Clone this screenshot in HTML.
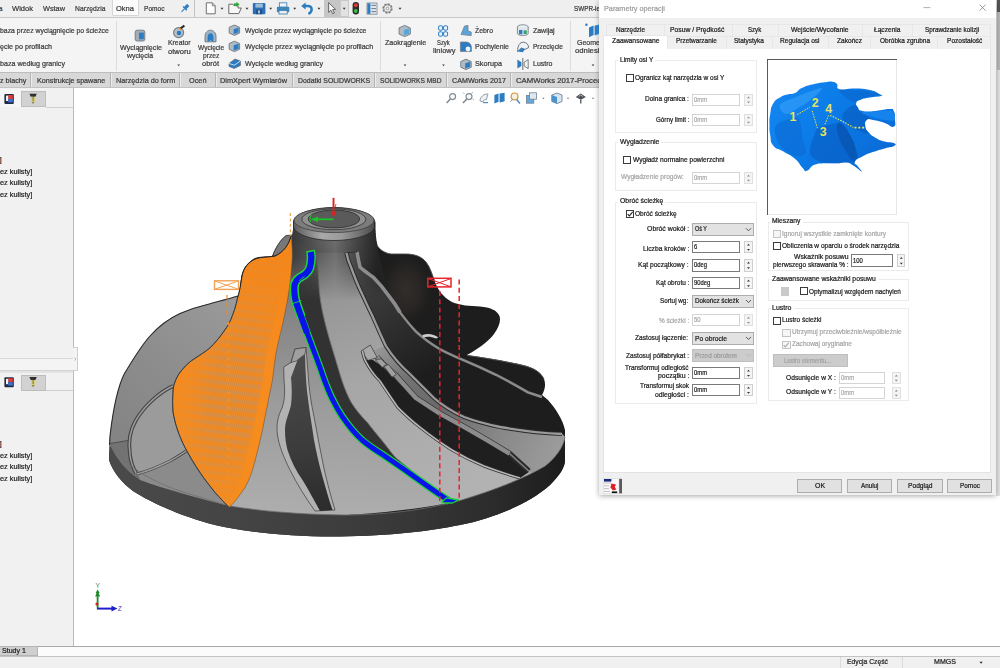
<!DOCTYPE html>
<html lang="pl"><head><meta charset="utf-8"><title>SOLIDWORKS CAM - Parametry operacji</title>
<style>
html,body{margin:0;padding:0;}
body{width:1000px;height:668px;position:relative;overflow:hidden;background:#fff;font-family:"Liberation Sans",sans-serif;}
.a{position:absolute;box-sizing:border-box;}
.t{position:absolute;white-space:nowrap;line-height:1.2;transform-origin:0 50%;display:inline-block;-webkit-text-stroke:0.22px currentColor;}
svg{position:absolute;left:0;top:0;}
</style></head><body>
<svg width="1000" height="668" viewBox="0 0 1000 668">
<defs>
<linearGradient id="gBase" x1="110" y1="0" x2="565" y2="0" gradientUnits="userSpaceOnUse">
<stop offset="0" stop-color="#4a4a4a"/><stop offset="0.25" stop-color="#454545"/><stop offset="0.6" stop-color="#3a3a3a"/><stop offset="0.85" stop-color="#2b2b2b"/><stop offset="1" stop-color="#1c1c1c"/>
</linearGradient>
<linearGradient id="gDome" x1="120" y1="440" x2="240" y2="300" gradientUnits="userSpaceOnUse">
<stop offset="0" stop-color="#848484"/><stop offset="0.5" stop-color="#8e8e8e"/><stop offset="1" stop-color="#9a9a9a"/>
</linearGradient>
<linearGradient id="gNeck" x1="293" y1="0" x2="377" y2="0" gradientUnits="userSpaceOnUse">
<stop offset="0" stop-color="#383838"/><stop offset="0.3" stop-color="#5a5a5a"/><stop offset="0.5" stop-color="#6e6e6e"/><stop offset="0.75" stop-color="#474747"/><stop offset="1" stop-color="#262626"/>
</linearGradient>
<linearGradient id="gNeckFade" x1="0" y1="238" x2="0" y2="300" gradientUnits="userSpaceOnUse">
<stop offset="0" stop-color="#fff" stop-opacity="1"/><stop offset="0.3" stop-color="#fff" stop-opacity="0.9"/><stop offset="1" stop-color="#fff" stop-opacity="0"/>
</linearGradient>
<mask id="mNeck"><rect x="280" y="200" width="120" height="110" fill="url(#gNeckFade)"/></mask>
<linearGradient id="gRim" x1="293" y1="0" x2="375" y2="0" gradientUnits="userSpaceOnUse">
<stop offset="0" stop-color="#5a5a5a"/><stop offset="0.35" stop-color="#a9a9a9"/><stop offset="0.6" stop-color="#9a9a9a"/><stop offset="1" stop-color="#4a4a4a"/>
</linearGradient>
<linearGradient id="gHub" x1="330" y1="250" x2="430" y2="500" gradientUnits="userSpaceOnUse">
<stop offset="0" stop-color="#8a8a8a"/><stop offset="0.2" stop-color="#989898"/><stop offset="0.5" stop-color="#a6a6a6"/><stop offset="1" stop-color="#b2b2b2"/>
</linearGradient>
<linearGradient id="gFront" x1="300" y1="250" x2="290" y2="510" gradientUnits="userSpaceOnUse">
<stop offset="0" stop-color="#6a6a6a"/><stop offset="0.25" stop-color="#858585"/><stop offset="0.6" stop-color="#9c9c9c"/><stop offset="1" stop-color="#adadad"/>
</linearGradient>
<linearGradient id="gWedge" x1="440" y1="405" x2="555" y2="460" gradientUnits="userSpaceOnUse">
<stop offset="0" stop-color="#686868"/><stop offset="0.5" stop-color="#878787"/><stop offset="1" stop-color="#9c9c9c"/>
</linearGradient>
<linearGradient id="gBand" x1="372" y1="345" x2="445" y2="410" gradientUnits="userSpaceOnUse">
<stop offset="0" stop-color="#9c9c9c"/><stop offset="0.5" stop-color="#727272"/><stop offset="1" stop-color="#686868"/>
</linearGradient>
<linearGradient id="gCface" x1="352" y1="258" x2="430" y2="372" gradientUnits="userSpaceOnUse">
<stop offset="0" stop-color="#484848"/><stop offset="0.45" stop-color="#343434"/><stop offset="1" stop-color="#1d1d1d"/>
</linearGradient>
<linearGradient id="gSface" x1="300" y1="350" x2="320" y2="510" gradientUnits="userSpaceOnUse"><stop offset="0" stop-color="#4c4c4c"/><stop offset="0.6" stop-color="#3c3c3c"/><stop offset="1" stop-color="#2c2c2c"/></linearGradient>
<radialGradient id="gA" cx="406" cy="290" r="1" gradientUnits="userSpaceOnUse" gradientTransform="translate(406,290) scale(26,36) translate(-406,-290)"><stop offset="0" stop-color="#3a3431" stop-opacity="0.75"/><stop offset="0.6" stop-color="#342f2c" stop-opacity="0.45"/><stop offset="1" stop-color="#2a2624" stop-opacity="0"/></radialGradient>
<linearGradient id="gOr" x1="290" y1="240" x2="215" y2="500" gradientUnits="userSpaceOnUse">
<stop offset="0" stop-color="#f4861a"/><stop offset="0.4" stop-color="#f68b1f"/><stop offset="1" stop-color="#f78c1e"/>
</linearGradient>
<pattern id="pLines" width="2" height="2" patternUnits="userSpaceOnUse" patternTransform="rotate(14)">
<rect x="0" y="0" width="0.58" height="2" fill="#a48c78"/>
</pattern>
<radialGradient id="gFade" cx="0" cy="0" r="1" gradientUnits="userSpaceOnUse" gradientTransform="translate(233,395) rotate(12) scale(52,118)">
<stop offset="0" stop-color="#fff" stop-opacity="0.95"/><stop offset="0.45" stop-color="#fff" stop-opacity="0.8"/><stop offset="0.8" stop-color="#fff" stop-opacity="0.32"/><stop offset="1" stop-color="#fff" stop-opacity="0.12"/>
</radialGradient>
<mask id="mFade"><rect x="100" y="200" width="300" height="400" fill="url(#gFade)"/></mask>
</defs>

<path d="M293.5,222 C293,228 293,233 292,237 L286,236 C280,240 275,249 272.5,256 C266,257 260,256 255,258 C248,262 243,268 241.5,276 C240,284 240,291 238,296 C228,299 218,301.5 210,303.7 C198,306.5 188,310 180,313.5 C168,319 158,327 150,336 C141,346 132,361 124.5,373.5 C118,386 113,410 110,436 L109.5,445 L109,460 C113,472 122,483 133,491 C150,502 180,516 215,525 C245,532 290,537 340,536.5 C390,536 430,531 460,525 C495,518 530,503 550,485 C560,475 565,467 565,460 L565,430 C563,420 556,409 548,400 L542,395 C545,390 546,384 544,379 C541,372 534,368 525,365.5 C510,362 490,358 467,355 C478,349 488,342 494,334 C499,327 501,321 499.5,316 C497,310 490,307.5 480,306.5 C470,306 460,305.5 452,302 C443,297 438,290 435,282 C432,274 430,267 426,262 C421,256 414,254 405,254 L391,254 C384,253 379,249 377,245 C375.5,240 375,232 374.8,222 C374.8,214 356,207.5 334,207.5 C312,207.5 293.5,214 293.5,222 Z" fill="#1d1d1d"/>

<ellipse cx="406" cy="290" rx="26" ry="36" fill="url(#gA)"/>
<!-- base side -->
<path d="M110,445 C125,465 150,481 180,491 C200,497 215,502 230,506 C260,511 300,514.5 345,515 C385,515 425,510 460,500.5 C495,490 525,478 545,466 C555,458 563,448 565,437 L565,460 C565,467 560,475 550,485 C530,503 495,518 460,525 C430,531 390,536 340,536.5 C290,537 245,532 215,525 C180,516 150,502 133,491 C122,483 113,472 109,460 Z" fill="url(#gBase)"/>

<!-- dome (left) -->
<path d="M238,296 C228,299 218,301.5 210,303.7 C198,306.5 188,310 180,313.5 C168,319 158,327 150,336 C141,346 132,361 124.5,373.5 C118,386 113,410 110,436 L109.5,445 C125,465 150,481 180,491 C200,497 215,502 230,506 L260,400 Z" fill="url(#gDome)"/>
<path d="M110,443.5 L128,440.5 C128.5,450 131,462 136,473 C137,476 138.5,478 140,480 C127,472 117,460 110,445 Z" fill="#737373"/>
<path d="M173,386 C160,392 145,405 136,420 C130,430 128,442 130,455 C131,463 133,468 136,473 C148,471 160,466 170,461 C177,457 182,454 186,451 C180,438 175,422 173,408 Z" fill="#9b9b9b"/>
<path d="M136,473 C148,471 160,466 170,461 C177,457 182,454 186,451 C192,463 200,476 210,487 C217,495 224,502 230,506 C200,499 165,489 140,480 Z" fill="#8b8b8b"/>
<path d="M173,386 C160,392 145,405 136,420 C130,430 128,442 130,455 C131,463 133,468 136,473" fill="none" stroke="#454545" stroke-width="3.8"/>
<path d="M173,386 C160,392 145,405 136,420 C130,430 128,442 130,455 C131,463 133,468 136,473" fill="none" stroke="#9a9a9a" stroke-width="1.5"/>
<path d="M137,474 C148,471 160,466 170,461 C177,457 182,454 186,451" fill="none" stroke="#454545" stroke-width="3"/>
<path d="M137,474 C148,471 160,466 170,461 C177,457 182,454 186,451" fill="none" stroke="#9c9c9c" stroke-width="1.5"/>
<path d="M110,443.5 L128,440.5" stroke="#4a4a4a" stroke-width="0.9"/>
<path d="M238,296 C228,299 218,301.5 210,303.7 C198,306.5 188,310 180,313.5 C168,319 158,327 150,336 C141,346 132,361 124.5,373.5 C118,386 113,410 110,436 L109.5,445" fill="none" stroke="#2c2c2c" stroke-width="1.1"/>

<!-- back gray blade -->
<path d="M293,235 L286,235.6 C280,240 275,249 272.5,256 L292,258 Z" fill="#787878" stroke="#2a2a2a" stroke-width="0.8"/>

<!-- front surface between orange and blue path -->
<path d="M292,237 L311,251  L311,251 L308.5,271.5 L295.5,284 L294.6,290 L295.7,301 L301.3,317 L307,332.7 L313.7,350.7 L320.4,368.7 L326,384.4 L332.8,400 L341.8,415.8 L351.9,429.3 L362,440 L384,455.5 L405,470 L426,485 L447,499.5 L450,501.5 L446,503.5 C400,512 350,515 345,515 C300,514.5 260,511 230,506 L260,400 Z" fill="url(#gFront)"/>

<!-- hub centre region (everything left of blade C root, right of dark blade) -->
<path d="M316.5,253 C318,265 318.6,278 319.3,290 C320,298 321.2,305 322.7,312.5 C324.3,320 326.2,327.5 328.3,335 C330.4,342.5 332.7,350 335,357.4 C337.2,365 339.5,372.6 341.8,380 C344.5,388 347.5,395.5 351,402 C355.5,409.5 361,416 367,422 C372.5,429 378,436 384,443 C386.8,446.5 389.5,450 392,453.4 C394,456 396,458 398.5,460 C411,470 424,481 437,492 L450,501.5 C453,501.5 457,501 460,500.5 C495,490 525,478 545,466 C555,458 563,448 565,437 L562,434  L500,427 L464,417 L434,398 L410,374 L386,346 L372,315 L360,289.5 L351,267 L346.5,252.7 Z" fill="url(#gHub)"/>

<!-- hub floor band + wedge (in shadow) -->
<path d="M374,350 L386,346 C393,357 401,366 410,374 C418,382 426,390 434,398 C443,406 453,412 464,417 L470,430 L440,414 L416,398.5 L395.6,376 L382,364 Z" fill="url(#gBand)"/>
<path d="M434,398 C443,406 453,412 464,417 C476,421.5 488,424.5 500,427 C520,430.5 540,433 562,434 L565,437 C563,448 555,458 545,466 L531,473 L509.6,453.6 L487,440 L464,426.8 L440,413.6 Z" fill="url(#gWedge)"/>


<!-- blade C face (slightly lighter near hub) -->
<path d="M346.5,252.7 C347.5,258 349,263 351,267 C353.5,274 356.5,282 360,289.5 C364,298 368,307 372,315 C376.5,325 381,336 386,346 C393,357 401,366 410,374 C418,382 426,390 434,398 L464,360.4 L440,349.2 L416,331.6 L400,312.4 L388.5,295.5 L373.5,277.5 L360,267 L357,252 Z" fill="url(#gCface)"/>

<!-- dark main blade next to blue path -->
<path d="M316.5,252.7 C318,265 318.6,278 319.3,290 C320,298 321.2,305 322.7,312.5 C324.3,320 326.2,327.5 328.3,335 C330.4,342.5 332.7,350 335,357.4 C337.2,365 339.5,372.6 341.8,380 C344.5,388 347.5,395.5 351,402 C355.5,409.5 361,416 367,422 C372.5,429 378,436 384,443 C386.8,446.5 389.5,450 392,453.4 C394,456 396,458 398.5,460 C411,470 424,481 437,492 L447,499.5 L426,485 L405,470 L384,455.5 L362,440 L351.9,429.3 L341.8,415.8 L332.8,400 L326,384.4 L320.4,368.7 L313.7,350.7 L307,332.7 L301.3,317 L295.7,301 L294.6,290 L295.5,284 L308.5,271.5 L311,252 Z" fill="#323232"/>
<path d="M316.5,252.7 C318,265 318.6,278 319.3,290 C320,298 321.2,305 322.7,312.5 C324.3,320 326.2,327.5 328.3,335 C330.4,342.5 332.7,350 335,357.4 C337.2,365 339.5,372.6 341.8,380 C344.5,388 347.5,395.5 351,402 C355.5,409.5 361,416 367,422 C372.5,429 378,436 384,443 C386.8,446.5 389.5,450 392,453.4 C394,456 396,458 398.5,460 C411,470 424,481 437,492" fill="none" stroke="#7c7c7c" stroke-width="0.9"/>

<!-- neck overlay -->
<path d="M293.5,222 C293,228 293,233 292,237 L290,300 L392,300 C385,280 377,250 375.5,240 C375,232 374.8,226 374.8,222 Z" fill="url(#gNeck)" mask="url(#mNeck)"/>

<!-- S splitter blade (front) -->
<path d="M295,349 L306,347.5 C307,360 308,372 308.7,382.5 C310,395 311.5,405 313.7,415 C317,432 320,450 323.7,467 C327,482 331,497 335,510 L315,511 C305,497 297,484 290,470 C284,458 279,446 277.5,435 C276,425 278,416 282,408 C285,400 285,390 284,380 L283.7,367 L291,362.5 Z" fill="#b2b2b2" stroke="#3a3a3a" stroke-width="0.7"/>
<path d="M291,377.5 C292,388 292,397 291,405 C289,414 285,421 285,430 C285,438 286,444 287.5,450 C291,461 296,471 302.5,480 C308,489 314,500 320,511 L332.5,510 C328,497 324,482 320,467.5 C317,455 314,442 312.5,430 C311,420 309,408 307.5,395 C306,382 305.5,370 305,354 L297.5,360 Z" fill="url(#gSface)"/>
<path d="M291,362.5 L296,361 L297.5,360 L305,354 L306,347.5 L295,349 Z" fill="#9f9f9f" stroke="#333" stroke-width="0.6"/>

<!-- blade C root line + tip strip -->
<path d="M346.5,252.7 C347.5,258 349,263 351,267 C353.5,274 356.5,282 360,289.5 C364,298 368,307 372,315 C376.5,325 381,336 386,346 C393,357 401,366 410,374 C418,382 426,390 434,398 C443,406 453,412 464,417 C476,421.5 488,424.5 500,427 C520,430.5 540,433 562,434" fill="none" stroke="#2a2a2a" stroke-width="4.2"/>
<path d="M346.5,252.7 C347.5,258 349,263 351,267 C353.5,274 356.5,282 360,289.5 C364,298 368,307 372,315 C376.5,325 381,336 386,346 C393,357 401,366 410,374 C418,382 426,390 434,398 C443,406 453,412 464,417 C476,421.5 488,424.5 500,427 C520,430.5 540,433 562,434" fill="none" stroke="#9a9a9a" stroke-width="2.3"/>
<path d="M357,252 C358,258 359,263 360,267 C364,271 369,274 373.5,277.5 C379,283 384,289 388.5,295.5 C393,301 397,307 400,312.4 C405,319 410,325.5 416,331.6 C424,339 432,344.5 440,349.2 C448,353.5 456,357 464,360.4 C475,365 486,370 496,374.8 C507,380.5 518,386.5 528,392.4 L542,397" fill="none" stroke="#2a2a2a" stroke-width="3.6"/>
<path d="M357,252 C358,258 359,263 360,267 C364,271 369,274 373.5,277.5 C379,283 384,289 388.5,295.5 C393,301 397,307 400,312.4 C405,319 410,325.5 416,331.6 C424,339 432,344.5 440,349.2 C448,353.5 456,357 464,360.4 C475,365 486,370 496,374.8 C507,380.5 518,386.5 528,392.4 L542,397" fill="none" stroke="#8c8c8c" stroke-width="2.4"/>
<path d="M357,252 C358,258 359,263 360,267 C364,271 369,274 373.5,277.5 C379,283 384,289 388.5,295.5 C393,301 397,307 400,312.4" fill="none" stroke="#8c8c8c" stroke-width="3.6"/>
<path d="M346.5,252.7 L357,252" stroke="#2a2a2a" stroke-width="0.8"/>

<!-- second splitter -->
<path d="M365,360 C369,368 374,375 380,381 C386,390 392,399 398,407.6 C405,414.5 412,421 419.6,426.8 C430,435 441,443 452,450 C462,456 473,461.5 484,466 C496,470.5 508,474.5 520,478 L529,472 L509,455 L486,442 L463,428.8 L439,415.6 L415,400 L394,377.5 L381,365.5 L373,360 Z" fill="#1f1f1f"/>
<path d="M377,357 L382.4,363.2 L395.6,375.2 L416,398 L440,413.6 L464,426.8 L487,440 L509.6,453.6 L528.8,471" fill="none" stroke="#2a2a2a" stroke-width="5.6" stroke-linejoin="round"/>
<path d="M377,357 L382.4,363.2 L395.6,375.2 L416,398 L440,413.6 L464,426.8 L487,440 L509.6,453.6" fill="none" stroke="#8c8c8c" stroke-width="4.4" stroke-linejoin="round"/>
<path d="M509.6,453.6 L528.8,471" fill="none" stroke="#808080" stroke-width="1.6"/>
<path d="M361,351.2 L370.3,345 L377.3,357.6 L368,360.4 Z" fill="#a8a8a8" stroke="#2e2e2e" stroke-width="0.7"/>
<path d="M375.5,360 L381,358.8 L386.5,364.5 L382.2,367.5 Z M384,366.2 L388.6,364.6 L396.3,374.5 L392,377.2 Z" fill="#a0a0a0" stroke="#2e2e2e" stroke-width="0.6"/>
<path d="M362.5,351 C363,355 364,358 365,360 C369,368 374,375 380,381 C386,390 392,399 398,407.6 C405,414.5 412,421 419.6,426.8 C430,435 441,443 452,450 C462,456 473,461.5 484,466 C496,470.5 508,474.5 520,478" fill="none" stroke="#2e2e2e" stroke-width="3"/>
<path d="M362.5,351 C363,355 364,358 365,360 C369,368 374,375 380,381 C386,390 392,399 398,407.6 C405,414.5 412,421 419.6,426.8 C430,435 441,443 452,450 C462,456 473,461.5 484,466 C496,470.5 508,474.5 520,478" fill="none" stroke="#b8b8b8" stroke-width="1.6"/>

<!-- small bright glimpse between blades A and B -->
<path d="M422.4,335 C428,333 434,334 438.4,337.5 L436,338.5 C431,336.5 427,336.5 423,337.5 Z" fill="#cfcfcf"/>
<!-- blade A / B subtle outlines -->
<path d="M467,355.5 C490,358.5 510,362.5 525,366 C534,368.5 541,372.5 544,379" fill="none" stroke="#555" stroke-width="0.9"/>
<path d="M377,245 C379,249 384,253 391,254 L405,254 C414,254 421,256 426,262 C430,267 432,274 435,282" fill="none" stroke="#4a4a4a" stroke-width="0.9"/>
<!-- rim top highlight -->
<path d="M110,445 C125,465 150,481 180,491 C200,497 215,502 230,506 C260,511 300,514.5 345,515 C385,515 425,510 460,500.5 C495,490 525,478 545,466 C555,458 563,448 565,437" fill="none" stroke="#6e6e6e" stroke-width="0.8"/>

<!-- hub top -->
<path d="M293.5,222 C293.5,214 312,207.5 334,207.5 C356,207.5 374.8,214 374.8,222 L374.8,226 C374.8,234 356,240.5 334,240.5 C312,240.5 293.5,234 293.5,226 Z" fill="url(#gRim)" stroke="#2a2a2a" stroke-width="0.8"/>
<ellipse cx="334" cy="220.3" rx="40" ry="12.3" fill="#7c7c7c" stroke="#3a3a3a" stroke-width="0.7"/>
<ellipse cx="333.8" cy="219.3" rx="32" ry="10.4" fill="#909090" stroke="#333" stroke-width="0.8"/>
<ellipse cx="334" cy="219" rx="25.7" ry="8.9" fill="#5a5a5a" stroke="#2b2b2b" stroke-width="0.8"/>

<!-- orange blade -->
<path d="M291,236 C289,244 284,252 275,256 C268,257.5 261,256.5 255,259 C248,262.5 243.5,268 242,276 C240.5,284 240,291 237.5,298 C236,306 233.5,313 230.8,319.5 C229,324 227,327 224.8,330 C220,337 215,343 209.8,348 C205,352 200,355 194.9,358.4 C190,361.5 186,365 182.9,368.9 C179,373 177,377 175.4,380.8 C173.5,385 173,389 173,392.8 C172.5,398 172.5,405 173,412 C175,424 179,436 185,447.5 C190,457 195,465 200,472.5 C205,480 210,486 215,492.5 C220,498 225,503 229,507.5 C235,502 240,495 245,487.5 C250,479 253,469 255.5,459 C258,449 260.5,440 262.5,430 C264.5,420 266,412 267.5,405 C269,396 271,388 272.5,380 C273.5,372 274.5,364 275.5,356 C277.5,345 280,335 282.5,325 C284.5,315 286.5,306 288,297 C290,285 291.5,272 292.3,258 C292.5,250 292,243 291,236 Z" fill="url(#gOr)" stroke="#5a4a3a" stroke-width="0.5"/>
<path d="M283,258 C270,258 262,258 255,259 C248,262.5 243.5,268 242,276 C240.5,284 240,291 237.5,298 C236,306 233.5,313 230.8,319.5 C229,324 227,327 224.8,330 C220,337 215,343 209.8,348 C205,352 200,355 194.9,358.4 C190,361.5 186,365 182.9,368.9 C179,373 177,377 175.4,380.8 C173.5,385 173,389 173,392.8 C172.5,398 172.5,405 173,412 C175,424 179,436 185,447.5 C190,457 195,465 200,472.5 C205,480 210,486 215,492.5 C220,498 225,503 229,507.5 C232,501 235,494 237,487 C241,478 244,468 246,459 C249,449 251,440 253,430 C255,421 257,412 258,405 C260,396 262,388 263,380 C264,372 265,364 266,356 C268,345 271,335 273,325 C275,315 277.5,306 279,297 C281,285 282.5,272 283,258 Z" fill="url(#pLines)" mask="url(#mFade)"/>
<path d="M237.5,298 C236,306 233.5,313 230.8,319.5 C229,324 227,327 224.8,330 C220,337 215,343 209.8,348 C205,352 200,355 194.9,358.4 C190,361.5 186,365 182.9,368.9 C179,373 177,377 175.4,380.8 C173.5,385 173,389 173,392.8 C172.5,398 172.5,405 173,412 C175,424 179,436 185,447.5 C190,457 195,465 200,472.5 C205,480 210,486 215,492.5 C220,498 225,503 229,507.5" fill="none" stroke="#2f3a44" stroke-width="1"/>
<path d="M291,236 C289,244 284,252 275,256 C268,257.5 261,256.5 255,259 C248,262.5 243.5,268 242,276 C240.5,284 240,291 237.5,298" fill="none" stroke="#222" stroke-width="1"/>

<!-- blue tool path -->
<path d="M310.5,250.6 C311.6,256 311.6,262 309.6,268.5 C308.6,271 307,272.6 305.6,273.8 C303,276 300.4,277 298.6,278.4 C296.4,280 295.2,282 294.6,284.4 C294,288 294.2,292 294.8,296 C295,298 295.3,299.6 295.7,301 C297.4,306.4 299.3,311.7 301.3,317 C303.2,322.2 305.1,327.5 307,332.7 C309.2,338.7 311.5,344.7 313.7,350.7 C316,356.7 318.2,362.7 320.4,368.7 C322.2,374 324,379.4 326,384.4 C328,389.6 330.2,395 332.8,400 C335.5,405.5 338.5,411 341.8,415.8 C345,420.5 348.3,425 351.9,429.3 C355,433 358.4,436.7 362,440 C369,446 376.5,450.8 384,455.5 C391,460.4 398,465.2 405,470 C412,475 419,480 426,485 C433,490 440,494.8 447,499.5 L450,501.5" fill="none" stroke="#1fd03a" stroke-width="7.4" stroke-linejoin="round"/>
<path d="M310.6,252 C311.6,256 311.6,262 309.6,268.5 C308.6,271 307,272.6 305.6,273.8 C303,276 300.4,277 298.6,278.4 C296.4,280 295.2,282 294.6,284.4 C294,288 294.2,292 294.8,296 C295,298 295.3,299.6 295.7,301 C297.4,306.4 299.3,311.7 301.3,317 C303.2,322.2 305.1,327.5 307,332.7 C309.2,338.7 311.5,344.7 313.7,350.7 C316,356.7 318.2,362.7 320.4,368.7 C322.2,374 324,379.4 326,384.4 C328,389.6 330.2,395 332.8,400 C335.5,405.5 338.5,411 341.8,415.8 C345,420.5 348.3,425 351.9,429.3 C355,433 358.4,436.7 362,440 C369,446 376.5,450.8 384,455.5 C391,460.4 398,465.2 405,470 C412,475 419,480 426,485 C433,490 440,494.8 447,499.5 L449,500.6" fill="none" stroke="#0a14e8" stroke-width="5" stroke-linejoin="round"/>
<path d="M310.5,250.6 C311.6,256 311.6,262 309.6,268.5 C308.6,271 307,272.6 305.6,273.8 C303,276 300.4,277 298.6,278.4 C296.4,280 295.2,282 294.6,284.4 C294,288 294.2,292 294.8,296 C295,298 295.3,299.6 295.7,301 C297.4,306.4 299.3,311.7 301.3,317" fill="none" stroke="#1fd03a" stroke-width="9.2" stroke-linejoin="round"/>
<path d="M310.6,252 C311.6,256 311.6,262 309.6,268.5 C308.6,271 307,272.6 305.6,273.8 C303,276 300.4,277 298.6,278.4 C296.4,280 295.2,282 294.6,284.4 C294,288 294.2,292 294.8,296 C295,298 295.3,299.6 295.7,301 C297.4,306.4 299.3,311.7 301.3,317 C303.2,322.2 305.1,327.5 307,332.7" fill="none" stroke="#0a14e8" stroke-width="6.2" stroke-linejoin="round"/>
<path d="M441.4,502.6 L446.4,497.8 L458.6,500 L452.4,503 Z" fill="#0a14e8" stroke="#1fd03a" stroke-width="1.3" stroke-linejoin="round"/>
<path d="M299.4,280.6 L304.6,276.4 M293,303.4 L301.5,300.6" stroke="#1fd03a" stroke-width="0.9"/>

<path d="M374.8,222 C375,232 375.5,240 377,245" fill="none" stroke="#222" stroke-width="1"/>

<!-- dashed construction lines / markers -->
<g fill="none" stroke="#e8232b" stroke-width="1.5">
<rect x="427.8" y="278.3" width="23.2" height="8.6" stroke-width="1.5"/>
<path d="M428,278.5 L451,286.8 M428,286.8 L451,278.5" stroke-width="1"/>
<path d="M439.8,291 V503" stroke-dasharray="5,3.2"/>
<path d="M459.2,279.5 V500" stroke-dasharray="5,3.2"/>
</g>
<g fill="none" stroke="#f2a256" stroke-width="1.2">
<rect x="214.5" y="280.8" width="24" height="8.6" stroke-width="1.4"/>
<path d="M214.8,281 L238.3,289.2 M214.8,289.2 L238.3,281" stroke-width="1"/>
<path d="M227,295 V318" stroke="#f08a24" stroke-dasharray="4.5,3"/>
<path d="M228.5,322 V482" stroke="#f98f1c" stroke-dasharray="3,4" stroke-width="1.5"/>
<path d="M290.4,213 V236" stroke="#e3a85a" stroke-dasharray="3,2.4"/>
</g>
<!-- origin arrows on hub -->
<path d="M333.5,197.8 V214" stroke="#e02020" stroke-width="1.9"/>
<path d="M331,212 L336.2,212 L333.6,217.6 Z" fill="#e02020"/>
<path d="M336,204 L335.2,207" stroke="#e02020" stroke-width="0.8"/>
<path d="M333.5,219.3 H316" stroke="#18c428" stroke-width="1.8"/>
<path d="M318,216.8 L318,221.9 L310.5,219.3 Z" fill="#18c428"/>
<path d="M311.5,214.8 C309.8,216.5 309.6,219.5 310.5,222" fill="none" stroke="#18c428" stroke-width="1.1"/>

<!-- triad -->
<g>
<path d="M97.6,608.6 V594" stroke="#1e8a2a" stroke-width="1.8"/>
<path d="M95.2,596.5 L100,596.5 L97.6,590 Z" fill="#1e8a2a"/>
<path d="M95.6,593 L99.6,593 L97.6,589.4 Z" fill="#1e8a2a"/>
<path d="M97,608.6 H112" stroke="#2020c8" stroke-width="2"/>
<path d="M111.5,605.8 L111.5,611.4 L117.5,608.6 Z" fill="#2020c8"/>
<circle cx="97" cy="604" r="1.6" fill="#d02020"/>
<text x="95.6" y="587.6" font-family="Liberation Sans, sans-serif" font-size="6.5" fill="#3a8a5a">Y</text>
<text x="117.8" y="611" font-family="Liberation Sans, sans-serif" font-size="6.5" fill="#3a3ac0">Z</text>
</g>
</svg>

<div class="a" style="left:0px;top:0px;width:600px;height:18px;background:#efefef;"></div>
<div class="a" style="left:0px;top:17px;width:600px;height:1px;background:#c9c9c9;"></div>
<span class="t" style="left:-1.8px;top:3.9px;font-size:7.6px;color:#3a3a3a">a</span>
<span class="t" style="left:12.0px;top:3.9px;font-size:7.6px;color:#3a3a3a;transform:scaleX(0.995);">Widok</span>
<span class="t" style="left:43.0px;top:3.9px;font-size:7.6px;color:#3a3a3a;transform:scaleX(0.965);">Wstaw</span>
<span class="t" style="left:75.0px;top:3.9px;font-size:7.6px;color:#3a3a3a;transform:scaleX(0.891);">Narzędzia</span>
<div class="a" style="left:111.5px;top:0px;width:27px;height:16px;background:#fbfbfb;border:1px solid #d6d6d6;border-top:none;border-radius:0 0 2px 2px;"></div>
<span class="t" style="left:115.5px;top:3.9px;font-size:7.6px;color:#3a3a3a;transform:scaleX(0.991);">Okna</span>
<span class="t" style="left:143.5px;top:3.9px;font-size:7.6px;color:#3a3a3a;transform:scaleX(0.867);">Pomoc</span>
<div class="a" style="left:194px;top:0px;width:1px;height:17px;background:#c4c4c4;"></div>
<div class="a" style="left:324px;top:0px;width:16px;height:17px;background:#c6c6c6;"></div>
<div class="a" style="left:340px;top:0px;width:8.5px;height:17px;background:#e2e2e2;border:1px solid #c9c9c9;"></div>
<span class="t" style="left:574.0px;top:4.4px;font-size:7.6px;color:#333;transform:scaleX(0.832);">SWPR-le</span>
<div class="a" style="left:0px;top:18px;width:600px;height:55px;background:#f4f4f4;"></div>
<div class="a" style="left:115.5px;top:21px;width:1px;height:50px;background:#dcdcdc;"></div>
<div class="a" style="left:380px;top:21px;width:1px;height:50px;background:#dcdcdc;"></div>
<div class="a" style="left:570px;top:21px;width:1px;height:50px;background:#dcdcdc;"></div>
<span class="t" style="left:0.0px;top:26.7px;font-size:7.4px;color:#3a3a3a;transform:scaleX(0.930);">baza przez wyciągnięcie po ścieżce</span>
<span class="t" style="left:0.0px;top:43.4px;font-size:7.4px;color:#3a3a3a;transform:scaleX(0.965);">ęcie po profilach</span>
<span class="t" style="left:0.0px;top:60.2px;font-size:7.4px;color:#3a3a3a;transform:scaleX(0.964);">baza według granicy</span>
<span class="t" style="left:119.5px;top:43.5px;font-size:7.4px;color:#3a3a3a;transform:scaleX(0.965);">Wyciągnięcie</span>
<span class="t" style="left:127.0px;top:52.0px;font-size:7.4px;color:#3a3a3a;transform:scaleX(0.930);">wycięcia</span>
<span class="t" style="left:167.5px;top:39.0px;font-size:7.4px;color:#3a3a3a;transform:scaleX(0.927);">Kreator</span>
<span class="t" style="left:168.0px;top:47.5px;font-size:7.4px;color:#3a3a3a;transform:scaleX(1.022);">otworu</span>
<span class="t" style="left:197.5px;top:43.9px;font-size:7.4px;color:#3a3a3a;transform:scaleX(0.887);">Wycięcie</span>
<span class="t" style="left:202.7px;top:52.2px;font-size:7.4px;color:#3a3a3a;transform:scaleX(0.901);">przez</span>
<span class="t" style="left:202.0px;top:60.2px;font-size:7.4px;color:#3a3a3a;transform:scaleX(1.008);">obrót</span>
<span class="t" style="left:244.5px;top:26.9px;font-size:7.4px;color:#3a3a3a;transform:scaleX(0.930);">Wycięcie przez wyciągnięcie po ścieżce</span>
<span class="t" style="left:244.5px;top:43.4px;font-size:7.4px;color:#3a3a3a;transform:scaleX(0.957);">Wycięcie przez wyciągnięcie po profilach</span>
<span class="t" style="left:244.5px;top:60.0px;font-size:7.4px;color:#3a3a3a;transform:scaleX(0.964);">Wycięcie według granicy</span>
<span class="t" style="left:384.5px;top:39.0px;font-size:7.4px;color:#3a3a3a;transform:scaleX(0.963);">Zaokrąglenie</span>
<span class="t" style="left:437.0px;top:39.0px;font-size:7.4px;color:#3a3a3a;transform:scaleX(0.792);">Szyk</span>
<span class="t" style="left:432.5px;top:47.4px;font-size:7.4px;color:#3a3a3a;transform:scaleX(1.013);">liniowy</span>
<span class="t" style="left:475.0px;top:26.9px;font-size:7.4px;color:#3a3a3a;transform:scaleX(0.931);">Żebro</span>
<span class="t" style="left:475.0px;top:43.4px;font-size:7.4px;color:#3a3a3a;transform:scaleX(0.939);">Pochylenie</span>
<span class="t" style="left:475.0px;top:60.0px;font-size:7.4px;color:#3a3a3a;transform:scaleX(0.980);">Skorupa</span>
<span class="t" style="left:533.0px;top:26.9px;font-size:7.4px;color:#3a3a3a;transform:scaleX(0.942);">Zawijaj</span>
<span class="t" style="left:533.0px;top:43.4px;font-size:7.4px;color:#3a3a3a;transform:scaleX(0.879);">Przecięcie</span>
<span class="t" style="left:533.0px;top:60.0px;font-size:7.4px;color:#3a3a3a;transform:scaleX(0.948);">Lustro</span>
<span class="t" style="left:576.5px;top:39.0px;font-size:7.4px;color:#3a3a3a;transform:scaleX(0.948);">Geome</span>
<span class="t" style="left:575.0px;top:47.4px;font-size:7.4px;color:#3a3a3a;transform:scaleX(1.045);">odniesi</span>
<div class="a" style="left:0px;top:72.8px;width:600px;height:15px;background:#d8d8d8;"></div>
<div class="a" style="left:0px;top:72.4px;width:600px;height:1px;background:#bdbdbd;"></div>
<div class="a" style="left:0px;top:87.2px;width:600px;height:1px;background:#c2c2c2;"></div>
<div class="a" style="left:30.0px;top:73.3px;width:1px;height:14px;background:#b4b4b4;"></div>
<div class="a" style="left:31.0px;top:73.3px;width:1px;height:14px;background:#ececec;"></div>
<div class="a" style="left:110.0px;top:73.3px;width:1px;height:14px;background:#b4b4b4;"></div>
<div class="a" style="left:111.0px;top:73.3px;width:1px;height:14px;background:#ececec;"></div>
<div class="a" style="left:179.0px;top:73.3px;width:1px;height:14px;background:#b4b4b4;"></div>
<div class="a" style="left:180.0px;top:73.3px;width:1px;height:14px;background:#ececec;"></div>
<div class="a" style="left:215.0px;top:73.3px;width:1px;height:14px;background:#b4b4b4;"></div>
<div class="a" style="left:216.0px;top:73.3px;width:1px;height:14px;background:#ececec;"></div>
<div class="a" style="left:292.0px;top:73.3px;width:1px;height:14px;background:#b4b4b4;"></div>
<div class="a" style="left:293.0px;top:73.3px;width:1px;height:14px;background:#ececec;"></div>
<div class="a" style="left:374.2px;top:73.3px;width:1px;height:14px;background:#b4b4b4;"></div>
<div class="a" style="left:375.2px;top:73.3px;width:1px;height:14px;background:#ececec;"></div>
<div class="a" style="left:446.2px;top:73.3px;width:1px;height:14px;background:#b4b4b4;"></div>
<div class="a" style="left:447.2px;top:73.3px;width:1px;height:14px;background:#ececec;"></div>
<div class="a" style="left:510.2px;top:73.3px;width:1px;height:14px;background:#b4b4b4;"></div>
<div class="a" style="left:511.2px;top:73.3px;width:1px;height:14px;background:#ececec;"></div>
<span class="t" style="left:0.0px;top:75.8px;font-size:7.5px;color:#3a3a3a;transform:scaleX(0.956);">z blachy</span>
<span class="t" style="left:37.0px;top:75.8px;font-size:7.5px;color:#3a3a3a;transform:scaleX(0.958);">Konstrukcje spawane</span>
<span class="t" style="left:115.7px;top:75.8px;font-size:7.5px;color:#3a3a3a;transform:scaleX(0.968);">Narzędzia do form</span>
<span class="t" style="left:189.0px;top:75.8px;font-size:7.5px;color:#3a3a3a;transform:scaleX(0.976);">Oceń</span>
<span class="t" style="left:220.0px;top:75.8px;font-size:7.5px;color:#3a3a3a;transform:scaleX(0.981);">DimXpert Wymiarów</span>
<span class="t" style="left:297.7px;top:75.8px;font-size:7.5px;color:#3a3a3a;transform:scaleX(0.919);">Dodatki SOLIDWORKS</span>
<span class="t" style="left:380.0px;top:75.8px;font-size:7.5px;color:#3a3a3a;transform:scaleX(0.884);">SOLIDWORKS MBD</span>
<span class="t" style="left:452.0px;top:75.8px;font-size:7.5px;color:#3a3a3a;transform:scaleX(0.955);">CAMWorks 2017</span>
<span class="t" style="left:515.7px;top:75.8px;font-size:7.5px;color:#3a3a3a;transform:scaleX(1.033);">CAMWorks 2017-Procedury</span>
<div class="a" style="left:0px;top:88.2px;width:73px;height:558px;background:#f1f1f1;"></div>
<div class="a" style="left:72.5px;top:88.2px;width:1px;height:558px;background:#bcbcbc;"></div>
<div class="a" style="left:0px;top:89px;width:21px;height:18px;background:#f6f6f6;"></div>
<div class="a" style="left:21px;top:90.5px;width:25px;height:16.5px;background:#d2d2d2;border:1px solid #bdbdbd;"></div>
<div class="a" style="left:46px;top:106.5px;width:27px;height:1px;background:#cfcfcf;"></div>
<div class="a" style="left:0px;top:358px;width:77px;height:13px;background:#f4f4f4;border:1px solid #d2d2d2;border-left:none;"></div>
<div class="a" style="left:73px;top:347px;width:5px;height:24px;background:#f4f4f4;border:1px solid #cfcfcf;border-left:none;"></div>
<div class="a" style="left:0px;top:358px;width:73px;height:1px;background:#d9d9d9;"></div>
<div class="a" style="left:0px;top:371px;width:73px;height:1.5px;background:#e3e3e3;"></div>
<div class="a" style="left:21px;top:374.5px;width:25px;height:16px;background:#d2d2d2;border:1px solid #bdbdbd;"></div>
<div class="a" style="left:46px;top:390px;width:27px;height:1px;background:#cfcfcf;"></div>
<span class="t" style="left:0.0px;top:166.9px;font-size:7.6px;color:#222;transform:scaleX(0.968);">ez kulisty]</span>
<span class="t" style="left:0.0px;top:178.4px;font-size:7.6px;color:#222;transform:scaleX(0.968);">ez kulisty]</span>
<span class="t" style="left:0.0px;top:190.4px;font-size:7.6px;color:#222;transform:scaleX(0.968);">ez kulisty]</span>
<span class="t" style="left:0.0px;top:450.8px;font-size:7.6px;color:#222;transform:scaleX(0.968);">ez kulisty]</span>
<span class="t" style="left:0.0px;top:462.0px;font-size:7.6px;color:#222;transform:scaleX(0.968);">ez kulisty]</span>
<span class="t" style="left:0.0px;top:473.8px;font-size:7.6px;color:#222;transform:scaleX(0.968);">ez kulisty]</span>
<span class="t" style="left:-0.6px;top:155.4px;font-size:7.6px;color:#222">]</span>
<span class="t" style="left:-0.6px;top:438.9px;font-size:7.6px;color:#222">]</span>
<div class="a" style="left:0px;top:645.5px;width:1000px;height:23px;background:#f0f0f0;"></div>
<div class="a" style="left:0px;top:645.5px;width:1000px;height:1px;background:#a8a8a8;"></div>
<div class="a" style="left:37.5px;top:646.5px;width:963px;height:9px;background:#fbfbfb;"></div>
<div class="a" style="left:0px;top:655.5px;width:1000px;height:1px;background:#c4c4c4;"></div>
<div class="a" style="left:0px;top:646px;width:37.5px;height:9.7px;background:#cfcfcf;border:1px solid #b5b5b5;border-left:none;"></div>
<span class="t" style="left:2.4px;top:646.6px;font-size:7.4px;color:#222;transform:scaleX(0.956);">Study 1</span>
<div class="a" style="left:840px;top:657px;width:1px;height:11px;background:#dcdcdc;"></div>
<div class="a" style="left:902px;top:657px;width:1px;height:11px;background:#dcdcdc;"></div>
<span class="t" style="left:847.0px;top:658.4px;font-size:7.2px;color:#222;transform:scaleX(0.940);">Edycja Część</span>
<span class="t" style="left:934.0px;top:658.4px;font-size:7.2px;color:#222;transform:scaleX(0.982);">MMGS</span>
<div class="a" style="left:996px;top:0px;width:4px;height:496px;background:#e2e2e2;"></div>
<div class="a" style="left:996.5px;top:12px;width:3.5px;height:58px;background:#b6b6b6;"></div>
<div class="a" style="left:996.5px;top:0px;width:3.5px;height:12px;background:#555555;"></div>
<div class="a" style="left:599px;top:0;width:397px;height:495px;background:#f0f0f0;box-shadow:0 1px 5px rgba(0,0,0,0.35);"></div>
<div class="a" style="left:599px;top:0px;width:397px;height:17.5px;background:#ffffff;"></div>
<span class="t" style="left:604.0px;top:3.8px;font-size:7.6px;color:#9c9c9c;transform:scaleX(0.956);">Parametry operacji</span>
<div class="a" style="left:603px;top:48px;width:388px;height:425px;background:#ffffff;border:1px solid #e3e3e3;"></div>
<div class="a" style="left:606px;top:24px;width:59px;height:13px;background:#f0f0f0;border:1px solid #e7e7e7;border-bottom:none;"></div>
<div class="a" style="left:664px;top:24px;width:69px;height:13px;background:#f0f0f0;border:1px solid #e7e7e7;border-bottom:none;"></div>
<div class="a" style="left:732px;top:24px;width:47px;height:13px;background:#f0f0f0;border:1px solid #e7e7e7;border-bottom:none;"></div>
<div class="a" style="left:778px;top:24px;width:84.5px;height:13px;background:#f0f0f0;border:1px solid #e7e7e7;border-bottom:none;"></div>
<div class="a" style="left:861.5px;top:24px;width:51.5px;height:13px;background:#f0f0f0;border:1px solid #e7e7e7;border-bottom:none;"></div>
<div class="a" style="left:912px;top:24px;width:79px;height:13px;background:#f0f0f0;border:1px solid #e7e7e7;border-bottom:none;"></div>
<div class="a" style="left:667px;top:36px;width:60px;height:12.5px;background:#f0f0f0;border:1px solid #e7e7e7;border-bottom:none;"></div>
<div class="a" style="left:726px;top:36px;width:47px;height:12.5px;background:#f0f0f0;border:1px solid #e7e7e7;border-bottom:none;"></div>
<div class="a" style="left:772px;top:36px;width:57px;height:12.5px;background:#f0f0f0;border:1px solid #e7e7e7;border-bottom:none;"></div>
<div class="a" style="left:828px;top:36px;width:43px;height:12.5px;background:#f0f0f0;border:1px solid #e7e7e7;border-bottom:none;"></div>
<div class="a" style="left:870px;top:36px;width:68px;height:12.5px;background:#f0f0f0;border:1px solid #e7e7e7;border-bottom:none;"></div>
<div class="a" style="left:937px;top:36px;width:54px;height:12.5px;background:#f0f0f0;border:1px solid #e7e7e7;border-bottom:none;"></div>
<div class="a" style="left:603px;top:35px;width:65px;height:14px;background:#ffffff;border:1px solid #e7e7e7;border-bottom:none;"></div>
<span class="t" style="left:616.0px;top:25.9px;font-size:6.9px;color:#1c1c1c;transform:scaleX(0.934);">Narzędzie</span>
<span class="t" style="left:669.6px;top:25.9px;font-size:6.9px;color:#1c1c1c;transform:scaleX(0.985);">Posuw / Prędkość</span>
<span class="t" style="left:748.4px;top:25.9px;font-size:6.9px;color:#1c1c1c;transform:scaleX(0.883);">Szyk</span>
<span class="t" style="left:791.0px;top:25.9px;font-size:6.9px;color:#1c1c1c;transform:scaleX(0.991);">Wejście/Wycofanie</span>
<span class="t" style="left:873.5px;top:25.9px;font-size:6.9px;color:#1c1c1c;transform:scaleX(0.960);">Łączenia</span>
<span class="t" style="left:924.8px;top:25.9px;font-size:6.9px;color:#1c1c1c;transform:scaleX(0.924);">Sprawdzanie kolizji</span>
<span class="t" style="left:612.0px;top:36.9px;font-size:6.9px;color:#1c1c1c;transform:scaleX(0.985);">Zaawansowane</span>
<span class="t" style="left:675.6px;top:37.4px;font-size:6.9px;color:#1c1c1c;transform:scaleX(0.933);">Przetwarzanie</span>
<span class="t" style="left:733.6px;top:37.4px;font-size:6.9px;color:#1c1c1c;transform:scaleX(0.943);">Statystyka</span>
<span class="t" style="left:780.0px;top:37.4px;font-size:6.9px;color:#1c1c1c;transform:scaleX(0.956);">Regulacja osi</span>
<span class="t" style="left:836.8px;top:37.4px;font-size:6.9px;color:#1c1c1c;transform:scaleX(0.959);">Zakończ</span>
<span class="t" style="left:879.5px;top:37.4px;font-size:6.9px;color:#1c1c1c;transform:scaleX(0.940);">Obróbka zgrubna</span>
<span class="t" style="left:947.0px;top:37.4px;font-size:6.9px;color:#1c1c1c;transform:scaleX(0.952);">Pozostałość</span>
<div class="a" style="left:615px;top:60px;width:142px;height:72.5px;border:1px solid #ebebeb;"></div>
<div class="a" style="left:618px;top:57px;width:37px;height:7px;background:#ffffff;"></div>
<span class="t" style="left:619.6px;top:55.9px;font-size:6.9px;color:#1c1c1c;transform:scaleX(0.950);">Limity osi Y</span>
<div class="a" style="left:625.5px;top:73.7px;width:8.2px;height:8.2px;background:#ffffff;border:1px solid #3c3c3c;"></div>
<span class="t" style="left:635.4px;top:73.8px;font-size:6.9px;color:#1c1c1c;transform:scaleX(0.947);">Ogranicz kąt narzędzia w osi Y</span>
<span class="t" style="left:645.0px;top:95.4px;font-size:6.9px;color:#1c1c1c;transform:scaleX(0.948);">Dolna granica :</span>
<div class="a" style="left:692px;top:94px;width:47.5px;height:11.5px;background:#ffffff;border:1px solid #d4d4d4;"></div>
<span class="t" style="left:694.0px;top:95.9px;font-size:6.9px;color:#a8a8a8;transform:scaleX(0.850);">0mm</span>
<div class="a" style="left:743.5px;top:94px;width:9px;height:11.5px;background:#f4f4f4;border:1px solid #e0e0e0;"></div>
<svg class="a" style="left:743.5px;top:94px" width="9" height="11.5" viewBox="0 0 9 11.5"><path d="M3.0 4.25 L4.5 2.55 L6.0 4.25Z M3.0 7.4799999999999995 L4.5 9.18 L6.0 7.4799999999999995Z" fill="#888"/></svg>
<span class="t" style="left:655.6px;top:115.5px;font-size:6.9px;color:#1c1c1c;transform:scaleX(0.908);">Górny limit :</span>
<div class="a" style="left:692px;top:114px;width:47.5px;height:11.8px;background:#ffffff;border:1px solid #d4d4d4;"></div>
<span class="t" style="left:694.0px;top:116.1px;font-size:6.9px;color:#a8a8a8;transform:scaleX(0.850);">0mm</span>
<div class="a" style="left:743.5px;top:114px;width:9px;height:11.8px;background:#f4f4f4;border:1px solid #e0e0e0;"></div>
<svg class="a" style="left:743.5px;top:114px" width="9" height="11.8" viewBox="0 0 9 11.8"><path d="M3.0 4.34 L4.5 2.64 L6.0 4.34Z M3.0 7.696000000000001 L4.5 9.396 L6.0 7.696000000000001Z" fill="#888"/></svg>
<div class="a" style="left:615px;top:142px;width:142px;height:49px;border:1px solid #ebebeb;"></div>
<div class="a" style="left:618px;top:139px;width:43px;height:7px;background:#ffffff;"></div>
<span class="t" style="left:619.6px;top:137.9px;font-size:6.9px;color:#1c1c1c;transform:scaleX(0.999);">Wygladzenie</span>
<div class="a" style="left:623.2px;top:156.2px;width:8.2px;height:8.2px;background:#ffffff;border:1px solid #3c3c3c;"></div>
<span class="t" style="left:633.0px;top:156.1px;font-size:6.9px;color:#1c1c1c;transform:scaleX(0.959);">Wygładź normalne powierzchni</span>
<span class="t" style="left:621.0px;top:173.2px;font-size:6.9px;color:#a6a6a6;transform:scaleX(0.953);">Wygładzenie progów:</span>
<div class="a" style="left:692px;top:171.8px;width:47.5px;height:12px;background:#ffffff;border:1px solid #d4d4d4;"></div>
<span class="t" style="left:694.0px;top:174.0px;font-size:6.9px;color:#a8a8a8;transform:scaleX(0.850);">0mm</span>
<div class="a" style="left:743.5px;top:171.8px;width:9px;height:12px;background:#f4f4f4;border:1px solid #e0e0e0;"></div>
<svg class="a" style="left:743.5px;top:171.8px" width="9" height="12" viewBox="0 0 9 12"><path d="M3.0 4.3999999999999995 L4.5 2.6999999999999997 L6.0 4.3999999999999995Z M3.0 7.840000000000001 L4.5 9.540000000000001 L6.0 7.840000000000001Z" fill="#888"/></svg>
<div class="a" style="left:615px;top:201.5px;width:142px;height:202px;border:1px solid #ebebeb;"></div>
<div class="a" style="left:618px;top:198.5px;width:47px;height:7px;background:#ffffff;"></div>
<span class="t" style="left:619.6px;top:197.4px;font-size:6.9px;color:#1c1c1c;transform:scaleX(0.993);">Obróć ścieżkę</span>
<div class="a" style="left:625.5px;top:209.6px;width:8.2px;height:8.2px;background:#ffffff;border:1px solid #3c3c3c;"></div>
<svg class="a" style="left:625.5px;top:209.6px" width="8.2" height="8.2" viewBox="0 0 8 8"><path d="M1.6 4 L3.3 5.8 L6.5 1.9" fill="none" stroke="#222" stroke-width="1"/></svg>
<span class="t" style="left:635.4px;top:209.6px;font-size:6.9px;color:#1c1c1c;transform:scaleX(0.952);">Obróć ścieżkę</span>
<span class="t" style="left:646.7px;top:225.1px;font-size:6.9px;color:#1c1c1c;transform:scaleX(1.003);">Obróć wokół :</span>
<div class="a" style="left:692px;top:222.6px;width:61.5px;height:13px;background:#e2e2e2;border:1px solid #adadad;"></div>
<span class="t" style="left:694.5px;top:225.3px;font-size:6.9px;color:#1c1c1c;transform:scaleX(0.789);">Oś Y</span>
<svg class="a" style="left:743.5px;top:222.6px" width="9" height="13" viewBox="0 0 9 13"><path d="M2 5.3 L4.5 7.8 L7 5.3" fill="none" stroke="#444" stroke-width="0.9"/></svg>
<span class="t" style="left:642.6px;top:244.9px;font-size:6.9px;color:#1c1c1c;transform:scaleX(0.976);">Liczba kroków :</span>
<div class="a" style="left:692px;top:241px;width:47.5px;height:12.3px;background:#ffffff;border:1px solid #7a7a7a;"></div>
<span class="t" style="left:694.0px;top:243.3px;font-size:6.9px;color:#1c1c1c;transform:scaleX(0.850);">6</span>
<div class="a" style="left:743.5px;top:241px;width:9px;height:12.3px;background:#f4f4f4;border:1px solid #cfcfcf;"></div>
<svg class="a" style="left:743.5px;top:241px" width="9" height="12.3" viewBox="0 0 9 12.3"><path d="M3.0 4.49 L4.5 2.79 L6.0 4.49Z M3.0 8.056 L4.5 9.756 L6.0 8.056Z" fill="#333"/></svg>
<span class="t" style="left:638.3px;top:261.1px;font-size:6.9px;color:#1c1c1c;transform:scaleX(0.972);">Kąt początkowy :</span>
<div class="a" style="left:692px;top:259px;width:47.5px;height:12.5px;background:#ffffff;border:1px solid #7a7a7a;"></div>
<span class="t" style="left:694.0px;top:261.4px;font-size:6.9px;color:#1c1c1c;transform:scaleX(0.850);">0deg</span>
<div class="a" style="left:743.5px;top:259px;width:9px;height:12.5px;background:#f4f4f4;border:1px solid #cfcfcf;"></div>
<svg class="a" style="left:743.5px;top:259px" width="9" height="12.5" viewBox="0 0 9 12.5"><path d="M3.0 4.55 L4.5 2.85 L6.0 4.55Z M3.0 8.2 L4.5 9.9 L6.0 8.2Z" fill="#333"/></svg>
<span class="t" style="left:655.6px;top:279.4px;font-size:6.9px;color:#1c1c1c;transform:scaleX(0.936);">Kąt obrotu :</span>
<div class="a" style="left:692px;top:276.5px;width:47.5px;height:12.5px;background:#ffffff;border:1px solid #7a7a7a;"></div>
<span class="t" style="left:694.0px;top:278.9px;font-size:6.9px;color:#1c1c1c;transform:scaleX(0.850);">90deg</span>
<div class="a" style="left:743.5px;top:276.5px;width:9px;height:12.5px;background:#f4f4f4;border:1px solid #cfcfcf;"></div>
<svg class="a" style="left:743.5px;top:276.5px" width="9" height="12.5" viewBox="0 0 9 12.5"><path d="M3.0 4.55 L4.5 2.85 L6.0 4.55Z M3.0 8.2 L4.5 9.9 L6.0 8.2Z" fill="#333"/></svg>
<span class="t" style="left:660.4px;top:297.1px;font-size:6.9px;color:#1c1c1c;transform:scaleX(0.919);">Sortuj wg:</span>
<div class="a" style="left:692px;top:295px;width:61.5px;height:12.5px;background:#e2e2e2;border:1px solid #adadad;"></div>
<span class="t" style="left:694.5px;top:297.4px;font-size:6.9px;color:#1c1c1c;transform:scaleX(0.918);">Dokończ ścieżk</span>
<svg class="a" style="left:743.5px;top:295px" width="9" height="12.5" viewBox="0 0 9 12.5"><path d="M2 5.05 L4.5 7.55 L7 5.05" fill="none" stroke="#444" stroke-width="0.9"/></svg>
<span class="t" style="left:658.7px;top:317.4px;font-size:6.9px;color:#a6a6a6;transform:scaleX(0.930);">% ścieżki :</span>
<div class="a" style="left:692px;top:314px;width:47.5px;height:12.2px;background:#ffffff;border:1px solid #d4d4d4;"></div>
<span class="t" style="left:694.0px;top:316.3px;font-size:6.9px;color:#a8a8a8;transform:scaleX(0.850);">50</span>
<div class="a" style="left:743.5px;top:314px;width:9px;height:12.2px;background:#f4f4f4;border:1px solid #e0e0e0;"></div>
<svg class="a" style="left:743.5px;top:314px" width="9" height="12.2" viewBox="0 0 9 12.2"><path d="M3.0 4.46 L4.5 2.76 L6.0 4.46Z M3.0 7.983999999999999 L4.5 9.684 L6.0 7.983999999999999Z" fill="#888"/></svg>
<span class="t" style="left:635.4px;top:334.4px;font-size:6.9px;color:#1c1c1c;transform:scaleX(0.963);">Zastosuj łączenie:</span>
<div class="a" style="left:692px;top:332.3px;width:61.5px;height:12.3px;background:#e2e2e2;border:1px solid #adadad;"></div>
<span class="t" style="left:694.5px;top:334.6px;font-size:6.9px;color:#1c1c1c;transform:scaleX(0.970);">Po obrocie</span>
<svg class="a" style="left:743.5px;top:332.3px" width="9" height="12.3" viewBox="0 0 9 12.3"><path d="M2 4.95 L4.5 7.45 L7 4.95" fill="none" stroke="#444" stroke-width="0.9"/></svg>
<span class="t" style="left:625.9px;top:351.9px;font-size:6.9px;color:#1c1c1c;transform:scaleX(0.962);">Zastosuj półfabrykat :</span>
<div class="a" style="left:692px;top:349.2px;width:61.5px;height:12.5px;background:#cccccc;border:1px solid #bfbfbf;"></div>
<span class="t" style="left:694.5px;top:351.6px;font-size:6.9px;color:#9a9a9a;transform:scaleX(0.928);">Przed obrotem</span>
<svg class="a" style="left:743.5px;top:349.2px" width="9" height="12.5" viewBox="0 0 9 12.5"><path d="M2 5.05 L4.5 7.55 L7 5.05" fill="none" stroke="#b5b5b5" stroke-width="0.9"/></svg>
<span class="t" style="left:625.0px;top:363.9px;font-size:6.9px;color:#1c1c1c;transform:scaleX(0.941);">Transformuj odległość</span>
<span class="t" style="left:657.5px;top:372.3px;font-size:6.9px;color:#1c1c1c;transform:scaleX(1.002);">początku :</span>
<div class="a" style="left:692px;top:367px;width:47.5px;height:12.2px;background:#ffffff;border:1px solid #7a7a7a;"></div>
<span class="t" style="left:694.0px;top:369.3px;font-size:6.9px;color:#1c1c1c;transform:scaleX(0.850);">0mm</span>
<div class="a" style="left:743.5px;top:367px;width:9px;height:12.2px;background:#f4f4f4;border:1px solid #cfcfcf;"></div>
<svg class="a" style="left:743.5px;top:367px" width="9" height="12.2" viewBox="0 0 9 12.2"><path d="M3.0 4.46 L4.5 2.76 L6.0 4.46Z M3.0 7.983999999999999 L4.5 9.684 L6.0 7.983999999999999Z" fill="#333"/></svg>
<span class="t" style="left:639.5px;top:381.7px;font-size:6.9px;color:#1c1c1c;transform:scaleX(0.933);">Transformuj skok</span>
<span class="t" style="left:655.0px;top:390.6px;font-size:6.9px;color:#1c1c1c;transform:scaleX(0.985);">odległości :</span>
<div class="a" style="left:692px;top:383.8px;width:47.5px;height:12.2px;background:#ffffff;border:1px solid #7a7a7a;"></div>
<span class="t" style="left:694.0px;top:386.1px;font-size:6.9px;color:#1c1c1c;transform:scaleX(0.850);">0mm</span>
<div class="a" style="left:743.5px;top:383.8px;width:9px;height:12.2px;background:#f4f4f4;border:1px solid #cfcfcf;"></div>
<svg class="a" style="left:743.5px;top:383.8px" width="9" height="12.2" viewBox="0 0 9 12.2"><path d="M3.0 4.46 L4.5 2.76 L6.0 4.46Z M3.0 7.983999999999999 L4.5 9.684 L6.0 7.983999999999999Z" fill="#333"/></svg>
<div class="a" style="left:766.5px;top:59.2px;width:130.5px;height:155.5px;background:#ffffff;border:1px solid #e6e6e6;"></div>
<div class="a" style="left:766.5px;top:59.2px;width:130.5px;height:1.3px;background:#5a5a5a;"></div>
<div class="a" style="left:766.5px;top:59.2px;width:1.3px;height:155.5px;background:#5a5a5a;"></div>
<div class="a" style="left:767.5px;top:221.5px;width:141.5px;height:49.5px;border:1px solid #ebebeb;"></div>
<div class="a" style="left:770.5px;top:218.5px;width:32.0px;height:7px;background:#ffffff;"></div>
<span class="t" style="left:772.1px;top:217.4px;font-size:6.9px;color:#1c1c1c;transform:scaleX(0.975);">Mieszany</span>
<div class="a" style="left:773px;top:230.2px;width:8.2px;height:8.2px;background:#f6f6f6;border:1px solid #c4c4c4;"></div>
<span class="t" style="left:782.4px;top:229.7px;font-size:6.9px;color:#a6a6a6;transform:scaleX(0.944);">Ignoruj wszystkie zamknięte kontury</span>
<div class="a" style="left:772.5px;top:242px;width:8.2px;height:8.2px;background:#ffffff;border:1px solid #3c3c3c;"></div>
<span class="t" style="left:782.4px;top:241.5px;font-size:6.9px;color:#1c1c1c;transform:scaleX(0.949);">Obliczenia w oparciu o środek narzędzia</span>
<span class="t" style="left:793.6px;top:253.1px;font-size:6.9px;color:#1c1c1c;transform:scaleX(0.989);">Wskaźnik posuwu</span>
<span class="t" style="left:772.5px;top:260.9px;font-size:6.9px;color:#1c1c1c;transform:scaleX(0.949);">pierwszego skrawania % :</span>
<div class="a" style="left:850.5px;top:254.3px;width:42px;height:13.2px;background:#ffffff;border:1px solid #7a7a7a;"></div>
<span class="t" style="left:852.5px;top:257.1px;font-size:6.9px;color:#1c1c1c;transform:scaleX(0.850);">100</span>
<div class="a" style="left:896.5px;top:254.3px;width:8.6px;height:13.2px;background:#f4f4f4;border:1px solid #cfcfcf;"></div>
<svg class="a" style="left:896.5px;top:254.3px" width="8.6" height="13.2" viewBox="0 0 8.6 13.2"><path d="M2.8 4.76 L4.3 3.0599999999999996 L5.8 4.76Z M2.8 8.703999999999999 L4.3 10.404 L5.8 8.703999999999999Z" fill="#333"/></svg>
<div class="a" style="left:767.5px;top:279px;width:141.5px;height:21.5px;border:1px solid #ebebeb;"></div>
<div class="a" style="left:770.5px;top:276px;width:107.5px;height:7px;background:#ffffff;"></div>
<span class="t" style="left:772.1px;top:274.9px;font-size:6.9px;color:#1c1c1c;transform:scaleX(0.985);">Zaawansowane wskaźniki posuwu</span>
<div class="a" style="left:780.5px;top:287.3px;width:8.6px;height:8.8px;background:#c9c9c9;"></div>
<div class="a" style="left:799.5px;top:287.2px;width:8.2px;height:8.2px;background:#ffffff;border:1px solid #3c3c3c;"></div>
<span class="t" style="left:809.4px;top:287.5px;font-size:6.9px;color:#1c1c1c;transform:scaleX(0.934);">Optymalizuj względem nachyleń</span>
<div class="a" style="left:767.5px;top:308px;width:141.5px;height:93px;border:1px solid #ebebeb;"></div>
<div class="a" style="left:770.5px;top:305px;width:23.0px;height:7px;background:#ffffff;"></div>
<span class="t" style="left:772.1px;top:303.9px;font-size:6.9px;color:#1c1c1c;transform:scaleX(1.012);">Lustro</span>
<div class="a" style="left:772.5px;top:317px;width:8.2px;height:8.2px;background:#ffffff;border:1px solid #3c3c3c;"></div>
<span class="t" style="left:782.4px;top:316.2px;font-size:6.9px;color:#1c1c1c;transform:scaleX(0.947);">Lustro ścieżki</span>
<div class="a" style="left:782.4px;top:328.5px;width:8.2px;height:8.2px;background:#f6f6f6;border:1px solid #c4c4c4;"></div>
<span class="t" style="left:792.3px;top:327.8px;font-size:6.9px;color:#a6a6a6;transform:scaleX(0.949);">Utrzymuj przeciwbieżnie/współbieżnie</span>
<div class="a" style="left:782.4px;top:341px;width:8.2px;height:8.2px;background:#f6f6f6;border:1px solid #c4c4c4;"></div>
<svg class="a" style="left:782.4px;top:341px" width="8.2" height="8.2" viewBox="0 0 8 8"><path d="M1.6 4 L3.3 5.8 L6.5 1.9" fill="none" stroke="#aaa" stroke-width="1"/></svg>
<span class="t" style="left:792.3px;top:340.3px;font-size:6.9px;color:#a6a6a6;transform:scaleX(0.947);">Zachowaj oryginalne</span>
<div class="a" style="left:773.2px;top:354px;width:74.8px;height:13.3px;background:#cccccc;border:1px solid #bfbfbf;"></div>
<span class="t" style="left:783.7px;top:356.9px;font-size:6.9px;color:#a2a2a2;transform:scaleX(0.853);">Lustro elementu...</span>
<span class="t" style="left:785.7px;top:373.9px;font-size:6.9px;color:#1c1c1c;transform:scaleX(0.966);">Odsunięcie w X :</span>
<div class="a" style="left:839px;top:371.8px;width:46px;height:12px;background:#ffffff;border:1px solid #d4d4d4;"></div>
<span class="t" style="left:841.0px;top:374.0px;font-size:6.9px;color:#a8a8a8;transform:scaleX(0.850);">0mm</span>
<div class="a" style="left:892.3px;top:371.8px;width:8.6px;height:12px;background:#f4f4f4;border:1px solid #e0e0e0;"></div>
<svg class="a" style="left:892.3px;top:371.8px" width="8.6" height="12" viewBox="0 0 8.6 12"><path d="M2.8 4.3999999999999995 L4.3 2.6999999999999997 L5.8 4.3999999999999995Z M2.8 7.840000000000001 L4.3 9.540000000000001 L5.8 7.840000000000001Z" fill="#888"/></svg>
<span class="t" style="left:785.7px;top:387.9px;font-size:6.9px;color:#1c1c1c;transform:scaleX(0.970);">Odsunięcie w Y :</span>
<div class="a" style="left:839px;top:386.8px;width:46px;height:12px;background:#ffffff;border:1px solid #d4d4d4;"></div>
<span class="t" style="left:841.0px;top:389.0px;font-size:6.9px;color:#a8a8a8;transform:scaleX(0.850);">0mm</span>
<div class="a" style="left:892.3px;top:386.8px;width:8.6px;height:12px;background:#f4f4f4;border:1px solid #e0e0e0;"></div>
<svg class="a" style="left:892.3px;top:386.8px" width="8.6" height="12" viewBox="0 0 8.6 12"><path d="M2.8 4.3999999999999995 L4.3 2.6999999999999997 L5.8 4.3999999999999995Z M2.8 7.840000000000001 L4.3 9.540000000000001 L5.8 7.840000000000001Z" fill="#888"/></svg>
<div class="a" style="left:797.2px;top:479.2px;width:44.799999999999955px;height:13.8px;background:#e1e1e1;border:1px solid #adadad;"></div>
<span class="t" style="left:814.5px;top:482.2px;font-size:6.9px;color:#1c1c1c;transform:scaleX(1.003);">OK</span>
<div class="a" style="left:847.2px;top:479.2px;width:44.799999999999955px;height:13.8px;background:#e1e1e1;border:1px solid #adadad;"></div>
<span class="t" style="left:861.0px;top:482.2px;font-size:6.9px;color:#1c1c1c;transform:scaleX(0.912);">Anuluj</span>
<div class="a" style="left:897.2px;top:479.2px;width:45.59999999999991px;height:13.8px;background:#e1e1e1;border:1px solid #adadad;"></div>
<span class="t" style="left:907.5px;top:482.2px;font-size:6.9px;color:#1c1c1c;transform:scaleX(0.968);">Podgląd</span>
<div class="a" style="left:947.2px;top:479.2px;width:44.799999999999955px;height:13.8px;background:#e1e1e1;border:1px solid #adadad;"></div>
<span class="t" style="left:960.0px;top:482.2px;font-size:6.9px;color:#1c1c1c;transform:scaleX(0.931);">Pomoc</span>
<svg width="1000" height="668" viewBox="0 0 1000 668" style="pointer-events:none">
<defs><linearGradient id="gBlue" x1="770" y1="90" x2="880" y2="170" gradientUnits="userSpaceOnUse"><stop offset="0" stop-color="#1487f2"/><stop offset="0.5" stop-color="#0b7ae6"/><stop offset="1" stop-color="#0a6ad6"/></linearGradient></defs>
<clipPath id="cpBlue"><path d="M769.5,124.4 C769.5,118.5 769.2,119.8 770.2,113.9 C771.3,108.1 770.5,108.1 773.2,103.4 C776.0,98.8 776.0,100.0 780.0,97.5 C784.0,94.9 783.3,95.7 787.5,94.5 C791.6,93.2 790.7,94.9 794.9,93.0 C799.1,91.1 797.0,90.2 802.4,87.7 C807.9,85.2 808.1,85.5 814.4,84.0 C820.7,82.4 819.9,82.8 824.9,82.2 C829.9,81.6 829.0,81.2 832.4,81.7 C835.7,82.2 834.8,81.9 836.9,84.0 C839.0,86.1 834.8,88.0 839.9,89.2 C844.9,90.5 846.4,88.3 854.8,88.5 C863.2,88.7 863.1,88.5 869.8,90.0 C876.5,91.4 875.6,92.0 878.8,93.7 C881.9,95.4 883.5,94.9 881.0,96.0 C878.5,97.0 875.4,96.4 869.8,97.5 C864.1,98.5 864.6,98.2 860.8,99.7 C857.0,101.2 857.2,100.6 856.3,102.7 C855.5,104.8 856.1,104.9 857.8,107.2 C859.5,109.5 857.3,109.9 862.3,110.9 C867.3,112.0 868.2,111.4 875.8,110.9 C883.3,110.4 884.2,109.1 889.3,109.1 C894.3,109.1 892.1,108.3 893.7,110.9 C895.3,113.5 894.9,114.0 894.9,118.4 C894.9,122.8 896.6,125.4 893.7,126.6 C890.9,127.9 890.6,124.8 884.8,122.9 C878.9,121.0 877.8,120.7 872.8,119.9 C867.8,119.1 868.9,118.2 866.8,119.9 C864.7,121.6 864.9,122.5 865.3,125.9 C865.7,129.3 865.4,128.5 868.3,131.9 C871.2,135.2 871.2,135.1 875.8,137.9 C880.4,140.6 879.7,140.1 884.8,141.6 C889.8,143.1 891.1,141.9 893.7,143.1 C896.3,144.4 896.6,144.6 894.0,146.1 C891.5,147.6 890.7,146.7 884.8,148.4 C878.8,150.0 879.1,149.8 872.8,152.1 C866.5,154.4 867.3,153.9 862.3,156.6 C857.3,159.3 856.1,159.1 854.8,161.8 C853.6,164.6 855.9,163.6 857.8,166.3 C859.7,169.0 862.8,171.8 861.6,171.6 C860.3,171.3 857.7,168.1 853.3,165.6 C848.9,163.1 850.4,163.2 845.8,162.6 C841.2,161.9 842.7,163.1 836.9,163.3 C831.0,163.5 831.2,162.9 824.9,163.3 C818.6,163.7 819.4,162.7 814.4,164.8 C809.4,166.9 810.3,170.0 806.9,170.8 C803.6,171.6 805.8,171.2 802.4,167.8 C799.1,164.5 800.4,163.4 794.9,158.8 C789.5,154.2 789.0,155.1 783.0,151.3 C776.9,147.6 776.8,150.0 773.2,145.4 C769.7,140.7 771.3,140.7 770.2,134.9 C769.2,129.0 769.5,130.3 769.5,124.4 Z"/></clipPath>
<path d="M769.5,124.4 C769.5,118.5 769.2,119.8 770.2,113.9 C771.3,108.1 770.5,108.1 773.2,103.4 C776.0,98.8 776.0,100.0 780.0,97.5 C784.0,94.9 783.3,95.7 787.5,94.5 C791.6,93.2 790.7,94.9 794.9,93.0 C799.1,91.1 797.0,90.2 802.4,87.7 C807.9,85.2 808.1,85.5 814.4,84.0 C820.7,82.4 819.9,82.8 824.9,82.2 C829.9,81.6 829.0,81.2 832.4,81.7 C835.7,82.2 834.8,81.9 836.9,84.0 C839.0,86.1 834.8,88.0 839.9,89.2 C844.9,90.5 846.4,88.3 854.8,88.5 C863.2,88.7 863.1,88.5 869.8,90.0 C876.5,91.4 875.6,92.0 878.8,93.7 C881.9,95.4 883.5,94.9 881.0,96.0 C878.5,97.0 875.4,96.4 869.8,97.5 C864.1,98.5 864.6,98.2 860.8,99.7 C857.0,101.2 857.2,100.6 856.3,102.7 C855.5,104.8 856.1,104.9 857.8,107.2 C859.5,109.5 857.3,109.9 862.3,110.9 C867.3,112.0 868.2,111.4 875.8,110.9 C883.3,110.4 884.2,109.1 889.3,109.1 C894.3,109.1 892.1,108.3 893.7,110.9 C895.3,113.5 894.9,114.0 894.9,118.4 C894.9,122.8 896.6,125.4 893.7,126.6 C890.9,127.9 890.6,124.8 884.8,122.9 C878.9,121.0 877.8,120.7 872.8,119.9 C867.8,119.1 868.9,118.2 866.8,119.9 C864.7,121.6 864.9,122.5 865.3,125.9 C865.7,129.3 865.4,128.5 868.3,131.9 C871.2,135.2 871.2,135.1 875.8,137.9 C880.4,140.6 879.7,140.1 884.8,141.6 C889.8,143.1 891.1,141.9 893.7,143.1 C896.3,144.4 896.6,144.6 894.0,146.1 C891.5,147.6 890.7,146.7 884.8,148.4 C878.8,150.0 879.1,149.8 872.8,152.1 C866.5,154.4 867.3,153.9 862.3,156.6 C857.3,159.3 856.1,159.1 854.8,161.8 C853.6,164.6 855.9,163.6 857.8,166.3 C859.7,169.0 862.8,171.8 861.6,171.6 C860.3,171.3 857.7,168.1 853.3,165.6 C848.9,163.1 850.4,163.2 845.8,162.6 C841.2,161.9 842.7,163.1 836.9,163.3 C831.0,163.5 831.2,162.9 824.9,163.3 C818.6,163.7 819.4,162.7 814.4,164.8 C809.4,166.9 810.3,170.0 806.9,170.8 C803.6,171.6 805.8,171.2 802.4,167.8 C799.1,164.5 800.4,163.4 794.9,158.8 C789.5,154.2 789.0,155.1 783.0,151.3 C776.9,147.6 776.8,150.0 773.2,145.4 C769.7,140.7 771.3,140.7 770.2,134.9 C769.2,129.0 769.5,130.3 769.5,124.4 Z" fill="url(#gBlue)"/>
<g clip-path="url(#cpBlue)">
<path d="M809.9,149.9 C809.9,145.1 812.6,139.4 814.4,134.9 C816.2,130.4 815.6,129.5 818.9,127.4 C822.2,125.3 826.1,125.0 830.9,124.4 C835.7,123.8 839.0,122.3 842.8,124.4 C846.7,126.5 847.9,130.7 850.3,134.9 C852.7,139.1 854.1,140.6 854.8,145.4 C855.6,150.1 855.9,155.4 854.1,158.8 C852.3,162.3 851.1,161.7 845.8,162.6 C840.6,163.5 834.2,164.1 827.9,163.3 C821.6,162.6 818.0,161.5 814.4,158.8 C810.8,156.1 809.9,154.6 809.9,149.9 Z" fill="#0a62c8" opacity="0.75"/>
<path d="M777.0,124.4 C780.3,121.1 787.5,119.3 791.9,118.4 C796.4,117.5 797.3,116.0 799.4,119.9 C801.5,123.8 801.2,131.3 802.4,137.9 C803.6,144.5 806.9,149.3 805.4,152.8 C803.9,156.4 799.7,157.0 794.9,155.8 C790.1,154.6 785.4,151.0 781.5,146.9 C777.6,142.7 776.4,139.4 775.5,134.9 C774.6,130.4 773.7,127.7 777.0,124.4 Z" fill="#0b6cd6" opacity="0.7"/>
<path d="M842.8,113.9 C844.6,110.3 851.2,105.2 854.8,104.9 C858.4,104.6 857.8,109.7 860.8,112.4 C863.8,115.1 868.9,115.7 869.8,118.4 C870.7,121.1 865.6,122.9 865.3,125.9 C865.0,128.9 870.4,132.8 868.3,133.4 C866.2,134.0 859.3,131.0 854.8,128.9 C850.3,126.8 848.2,125.9 845.8,122.9 C843.4,119.9 841.0,117.5 842.8,113.9 Z" fill="#0960c4" opacity="0.7"/>
<path d="M780.0,104.9 C781.8,101.6 789.0,100.1 794.9,97.5 C800.9,94.8 804.5,93.3 809.9,91.5 C815.3,89.7 821.9,86.7 821.9,88.5 C821.9,90.3 814.7,96.6 809.9,100.4 C805.1,104.3 802.7,105.2 797.9,107.9 C793.1,110.6 789.6,114.5 786.0,113.9 C782.4,113.3 778.2,108.2 780.0,104.9 Z" fill="#3aa4fb" opacity="0.55"/>
<path d="M839.9,90.0 C841.6,88.5 848.8,89.7 854.8,90.0 C860.8,90.3 865.0,90.6 869.8,91.5 C874.6,92.4 878.8,93.4 878.8,94.5 C878.8,95.5 873.4,95.8 869.8,96.7 C866.2,97.6 863.8,97.9 860.8,99.0 C857.8,100.0 857.8,102.2 854.8,101.9 C851.8,101.6 848.8,99.9 845.8,97.5 C842.8,95.1 838.1,91.5 839.9,90.0 Z" fill="#0a66cc" opacity="0.6"/>
<path d="M862.3,112.4 C862.9,111.4 870.4,112.1 875.8,111.7 C881.2,111.2 885.7,110.0 889.3,110.2 C892.8,110.3 892.5,110.5 893.4,112.4 C894.4,114.4 895.8,118.4 894.0,119.9 C892.3,121.4 889.0,120.5 884.8,119.9 C880.5,119.3 877.3,118.4 872.8,116.9 C868.3,115.4 861.7,113.5 862.3,112.4 Z" fill="#1a8cf4" opacity="0.7"/>
<path d="M836.9,125.9 C837.5,122.9 839.3,120.5 842.8,124.4 C846.4,128.3 851.8,137.3 854.8,145.4 C857.8,153.4 859.0,162.7 857.8,164.8 C856.6,166.9 852.4,160.9 848.8,155.8 C845.2,150.7 842.2,145.4 839.9,139.4 C837.5,133.4 836.3,128.9 836.9,125.9 Z" fill="#064ea8" opacity="0.6"/>
</g>
<path d="M797.2,114.7 L809.9,107.2" stroke="#e6e45e" stroke-width="1.0" stroke-dasharray="1.6,1.2" fill="none"/>
<path d="M812.2,110.9 L817.4,128.1" stroke="#e6e45e" stroke-width="1.0" stroke-dasharray="1.6,1.2" fill="none"/>
<path d="M824.9,124.4 L828.6,115.4" stroke="#e6e45e" stroke-width="1.0" stroke-dasharray="1.6,1.2" fill="none"/>
<path d="M830.1,115.4 L842.8,121.4 L853.3,127.4" stroke="#e6e45e" stroke-width="1.1" stroke-dasharray="1.6,1.2" fill="none"/>
<path d="M854.5,127.7 H864.1" stroke="#e6e45e" stroke-width="1.8" stroke-dasharray="2,1.8" fill="none"/>
<text x="793.0" y="120.6" text-anchor="middle" font-family="Liberation Sans, sans-serif" font-weight="bold" font-size="12.4" fill="#e6e45e">1</text>
<text x="815.1" y="107.1" text-anchor="middle" font-family="Liberation Sans, sans-serif" font-weight="bold" font-size="12.4" fill="#e6e45e">2</text>
<text x="823.1" y="136.0" text-anchor="middle" font-family="Liberation Sans, sans-serif" font-weight="bold" font-size="12.4" fill="#e6e45e">3</text>
<text x="828.6" y="113.1" text-anchor="middle" font-family="Liberation Sans, sans-serif" font-weight="bold" font-size="12.4" fill="#e6e45e">4</text>
<g transform="translate(185,8.3) rotate(45)"><rect x="-1.6" y="-4.6" width="3.2" height="4.4" rx="0.6" fill="#2b7cc2"/><rect x="-2.6" y="-0.6" width="5.2" height="1.4" fill="#2b7cc2"/><path d="M0,0.8 V5" stroke="#2b7cc2" stroke-width="1"/></g>
<path d="M206.3,2.8 H212.3 L215.2,5.8 V13.8 H206.3 Z" fill="#fdfdfd" stroke="#6f6f6f" stroke-width="1"/><path d="M212.3,2.8 V5.8 H215.2" fill="none" stroke="#6f6f6f" stroke-width="0.8"/>
<path d="M220.5,7.7749999999999995 L223.5,7.7749999999999995 L222,9.725 Z" fill="#3a3a3a"/>
<path d="M228.8,13.6 V4.2 H232.6 L233.8,5.6 H238 V8 H241.3 L238.8,13.6 Z" fill="#f7f7f7" stroke="#6a6a6a" stroke-width="1"/><path d="M233.8,3.2 H236.5 V1.8 L239.6,4.4 L236.5,7 V5.6 H233.8 Z" fill="#2fae3c"/>
<path d="M245.5,7.7749999999999995 L248.5,7.7749999999999995 L247,9.725 Z" fill="#3a3a3a"/>
<rect x="252.8" y="3" width="12.6" height="11.2" rx="1" fill="#2c6fb4"/><rect x="255.4" y="3.6" width="7.4" height="4" fill="#9bbbd8"/><rect x="256.2" y="9.6" width="5.8" height="4.6" fill="#1d4f86"/><rect x="258.2" y="10.4" width="1.6" height="3" fill="#cfe0ef"/>
<path d="M269.2,7.7749999999999995 L272.2,7.7749999999999995 L270.7,9.725 Z" fill="#3a3a3a"/>
<rect x="279.4" y="2.8" width="7.4" height="4.4" fill="#f2f5f8" stroke="#4b87b7" stroke-width="0.9"/><rect x="276.9" y="6.8" width="12.4" height="5.4" rx="1" fill="#3e86b8"/><rect x="279" y="10.4" width="8.2" height="3.6" fill="#e8eef3" stroke="#3b79a8" stroke-width="0.8"/>
<path d="M293.2,7.7749999999999995 L296.2,7.7749999999999995 L294.7,9.725 Z" fill="#3a3a3a"/>
<path d="M303.4,6 H308 C311.6,6 312.4,9.4 311,11.6 C310.4,12.6 309.4,13.4 308.4,13.8" fill="none" stroke="#2b7cc2" stroke-width="2.6"/><path d="M301.2,6 L305.6,2.6 V9.4 Z" fill="#2b7cc2"/>
<path d="M317.5,7.7749999999999995 L320.5,7.7749999999999995 L319,9.725 Z" fill="#3a3a3a"/>
<path d="M328.6,2.6 V12.4 L331,10.2 L332.8,13.8 L334.4,13 L332.7,9.6 L335.6,9.4 Z" fill="#f4f4f4" stroke="#4a4a4a" stroke-width="0.8"/>
<path d="M342.7,7.7749999999999995 L345.7,7.7749999999999995 L344.2,9.725 Z" fill="#3a3a3a"/>
<rect x="352.6" y="2" width="6.4" height="12.4" rx="3" fill="#2e2e2e"/><circle cx="355.8" cy="5.2" r="1.9" fill="#e03a32"/><circle cx="355.8" cy="11" r="1.9" fill="#3cc043"/>
<rect x="367" y="3" width="10" height="11.2" fill="#dfe6ec" stroke="#7b8790" stroke-width="0.8"/><rect x="367.4" y="3.4" width="3" height="10.4" fill="#2b7cc2"/><path d="M371.4,5.4 H376 M371.4,8.6 H376 M371.4,11.6 H376" stroke="#6d7c88" stroke-width="1"/>
<circle cx="387.5" cy="8.5" r="4.3" fill="#f3f3f3" stroke="#7a7a7a" stroke-width="1.7" stroke-dasharray="2.2,1.1"/><circle cx="387.5" cy="8.5" r="3.6" fill="#f3f3f3" stroke="#858585" stroke-width="0.8"/><circle cx="387.5" cy="8.5" r="1.4" fill="none" stroke="#858585" stroke-width="0.8"/>
<path d="M398.5,7.7749999999999995 L401.5,7.7749999999999995 L400,9.725 Z" fill="#3a3a3a"/>
<rect x="135.2" y="30.200000000000003" width="9.6" height="10.8" rx="2" fill="#a4adb5" stroke="#76808a" stroke-width="1"/>
<rect x="139.04" y="32.576" width="4.8" height="6.696000000000001" fill="#2b7cc2"/>
<circle cx="178.6" cy="32.6" r="5" fill="#b9c1c8" stroke="#76808a" stroke-width="1.2"/><circle cx="179" cy="33" r="2.3" fill="#2b7cc2"/><path d="M180.2,28.6 L184.4,25.6" stroke="#2b2b2b" stroke-width="2"/><path d="M179.2,27.4 L181,29.8" stroke="#e98a22" stroke-width="1.4"/>
<path d="M177.39999999999998,64.485 L180.0,64.485 L178.7,66.175 Z" fill="#3a3a3a"/>
<path d="M205,36.5 C205,32.6 207.6,30.2 210.5,30.2 C213.4,30.2 216,32.6 216,36.5 V41.8 H205 Z" fill="#9fb3c4" stroke="#76808a" stroke-width="1"/><path d="M207.6,37 C207.6,34.6 209,33.2 210.5,33.2 C212,33.2 213.4,34.6 213.4,37 V42 L210.5,40.2 L207.6,42 Z" fill="#2b7cc2"/>
<path d="M229.20000000000002,27.34 L234.4,25.0 L239.6,27.34 V33.06 L234.4,35.4 L229.20000000000002,33.06 Z" fill="#b3bbc2" stroke="#76808a" stroke-width="1"/>
<path d="M233.62,29.16 L238.56,27.599999999999998 V32.54 L233.62,34.36 Z" fill="#2b7cc2"/>
<path d="M229.20000000000002,43.54 L234.4,41.199999999999996 L239.6,43.54 V49.26 L234.4,51.6 L229.20000000000002,49.26 Z" fill="#b3bbc2" stroke="#76808a" stroke-width="1"/>
<path d="M233.62,45.36 L238.56,43.8 V48.74 L233.62,50.56 Z" fill="#2b7cc2"/>
<path d="M229,63.5 L235,59 L240.4,61 V65.4 L234.2,68.4 L229,66.4 Z" fill="#2b7cc2" stroke="#5f666c" stroke-width="0.7"/><path d="M229,63.5 L234.4,65.2 L240.4,61" fill="none" stroke="#dce9f3" stroke-width="0.9"/>
<path d="M399.09999999999997,27.92 L404.7,25.4 L410.3,27.92 V34.08 L404.7,36.6 L399.09999999999997,34.08 Z" fill="#b3bbc2" stroke="#76808a" stroke-width="1"/>
<path d="M403.86,29.88 L409.18,28.2 V33.52 L403.86,35.48 Z" fill="#5aa5dc"/>
<path d="M403.7,64.485 L406.3,64.485 L405,66.175 Z" fill="#3a3a3a"/>
<rect x="438.6" y="25.8" width="4" height="4.4" rx="1.2" fill="#eef3f7" stroke="#2b7cc2" stroke-width="1"/>
<rect x="443.6" y="25.8" width="4" height="4.4" rx="1.2" fill="#eef3f7" stroke="#2b7cc2" stroke-width="1"/>
<rect x="438.6" y="31.8" width="4" height="4.4" rx="1.2" fill="#eef3f7" stroke="#2b7cc2" stroke-width="1"/>
<rect x="443.6" y="31.8" width="4" height="4.4" rx="1.2" fill="#eef3f7" stroke="#2b7cc2" stroke-width="1"/>
<path d="M442.2,64.485 L444.8,64.485 L443.5,66.175 Z" fill="#3a3a3a"/>
<path d="M461,34.5 L464.5,26 L468,25.4 V31 L471.2,32 V35.6 Z" fill="#5aa5dc" stroke="#76808a" stroke-width="0.8"/>
<path d="M460.4,42 H466 C469.6,42 471.4,44.6 471.4,47.6 V51.4 H460.4 Z" fill="#2b7cc2" stroke="#76808a" stroke-width="0.8"/><circle cx="468" cy="49" r="2.4" fill="#eef3f7"/>
<path d="M460.8,61.540000000000006 L466,59.2 L471.2,61.540000000000006 V67.26 L466,69.60000000000001 L460.8,67.26 Z" fill="#b3bbc2" stroke="#76808a" stroke-width="1"/>
<path d="M465.22,63.36000000000001 L470.16,61.800000000000004 V66.74000000000001 L465.22,68.56 Z" fill="#2b7cc2"/>
<ellipse cx="522.8" cy="27" rx="5.4" ry="2.2" fill="#eef3f7" stroke="#76808a" stroke-width="0.9"/><path d="M517.4,27 V33.4 C517.4,36.2 528.2,36.2 528.2,33.4 V27" fill="#dfe5ea" stroke="#76808a" stroke-width="0.9"/><rect x="519" y="30" width="3.4" height="4.2" fill="#2b7cc2"/><rect x="523.6" y="30.4" width="3.2" height="3.6" fill="#3aa06a"/>
<path d="M517.6,51.6 C517.6,45 520,42.2 523.4,42.2 C526.6,42.2 528.6,44.6 528.6,47.6 L525,49.4 L521.4,48 Z" fill="#eef3f7" stroke="#5f666c" stroke-width="0.9"/><path d="M517.8,51.6 L521.4,48 L525,49.4 L522.6,52.2 Z" fill="#2b7cc2"/>
<path d="M522.8,58 V70" stroke="#55606a" stroke-width="0.9"/><path d="M517.4,59.6 L521.4,62.2 V66 L517.4,68.6 Z" fill="#2b7cc2"/><path d="M528.2,59.6 L524.2,62.2 V66 L528.2,68.6 Z" fill="#f1f4f7" stroke="#5f666c" stroke-width="0.8"/>
<path d="M589,27.4 L593.6,25.4 V35 L589,37.2 Z M594.6,25.8 L599,24.4 V34 L594.6,35.4 Z" fill="#2b7cc2"/><circle cx="586.4" cy="24.8" r="1.2" fill="#2b7cc2"/>
<path d="M591.7,64.485 L594.3,64.485 L593,66.175 Z" fill="#3a3a3a"/>
<circle cx="452.6" cy="96.60000000000001" r="3" fill="#f5f7f9" stroke="#7e8a94" stroke-width="1.1"/><path d="M450.4,99.0 L446.6,103.0" stroke="#7e8a94" stroke-width="1.6"/>
<circle cx="469.0" cy="96.60000000000001" r="3" fill="#f5f7f9" stroke="#7e8a94" stroke-width="1.1"/><path d="M466.79999999999995,99.0 L463.0,103.0" stroke="#7e8a94" stroke-width="1.6"/>
<path d="M464.4,94 L463,92.6 M471.4,93.4 L473,92.4 M472.6,99 L474,99.8" stroke="#8d98a2" stroke-width="0.8"/>
<path d="M480,100.8 C480,97 484,93.6 488,94 L486.4,99.6 C484.6,99.4 483,100.4 482.6,102 Z" fill="#eef2f5" stroke="#8592a0" stroke-width="0.9"/><path d="M483,102.6 H488" stroke="#4f8fc6" stroke-width="1.2"/>
<path d="M494.4,95 L498.6,93.4 V101.8 L494.4,103.4 Z M500,93.6 L504.6,92.8 V101.2 L500,102.4 Z" fill="#2b7cc2"/><path d="M498.6,93.4 L500,93.6 V102.4 L498.6,101.8" fill="#9fc4e4"/>
<circle cx="514.6" cy="96.4" r="3.4" fill="#f5f0e6" stroke="#d9962e" stroke-width="1.2"/><path d="M516.6,99.4 L520,103.4" stroke="#4f8fc6" stroke-width="1.5"/><path d="M510.4,101.6 L513,99.2" stroke="#8592a0" stroke-width="1"/>
<rect x="526.4" y="95.4" width="7.4" height="7.8" fill="#6aa7d8" stroke="#6f8192" stroke-width="0.8"/><rect x="529.6" y="92.8" width="7" height="6.4" fill="#dfe8ef" stroke="#6f8192" stroke-width="0.8"/>
<path d="M542.1999999999999,97.74000000000001 L544.6,97.74000000000001 L543.4,99.30000000000001 Z" fill="#777"/>
<path d="M551.8,95 L557,93 L562,95 V101.4 L557,103.6 L551.8,101.4 Z" fill="#d7e6f2" stroke="#6f8192" stroke-width="0.9"/><path d="M551.8,95 L557,97 V103.6 L551.8,101.4 Z" fill="#4b93cd"/>
<path d="M566.8,97.74000000000001 L569.2,97.74000000000001 L568,99.30000000000001 Z" fill="#777"/>
<path d="M575.8,97 L580.8,93.4 L585.8,97 L580.8,99.8 Z" fill="#4a4f55"/><path d="M580.8,99.8 V103.4" stroke="#4a4f55" stroke-width="1.3"/><path d="M578.6,96.6 L580.8,95 L583,96.6" fill="none" stroke="#d9dde1" stroke-width="0.7"/>
<path d="M591.8,97.74000000000001 L594.2,97.74000000000001 L593,99.30000000000001 Z" fill="#777"/>
<rect x="4.4" y="94" width="9.4" height="10" rx="1" fill="#1f2a44"/><rect x="8.2" y="95" width="4.6" height="4" fill="#e23b33"/><rect x="6" y="95.6" width="2.2" height="5.4" fill="#f4f4f4"/><rect x="8.2" y="99" width="4.6" height="3.4" fill="#3f6fd0"/>
<path d="M29.4,93.8 H36.8 L35.4,96.8 H30.8 Z" fill="#2c2c2c"/><rect x="31.2" y="96.8" width="3.8" height="5" fill="#d8cf74"/><path d="M31.6,101.8 L33.1,104.2 L34.6,101.8 Z" fill="#8a8a55"/><path d="M33.1,94.8 V100.8" stroke="#4a4a3a" stroke-width="0.7"/>
<rect x="4.4" y="377.2" width="9.4" height="10" rx="1" fill="#1f2a44"/><rect x="8.2" y="378.2" width="4.6" height="4" fill="#e23b33"/><rect x="6" y="378.8" width="2.2" height="5.4" fill="#f4f4f4"/><rect x="8.2" y="382.2" width="4.6" height="3.4" fill="#3f6fd0"/>
<path d="M29.4,377.0 H36.8 L35.4,380.0 H30.8 Z" fill="#2c2c2c"/><rect x="31.2" y="380.0" width="3.8" height="5" fill="#d8cf74"/><path d="M31.6,385.0 L33.1,387.4 L34.6,385.0 Z" fill="#8a8a55"/><path d="M33.1,378.0 V384.0" stroke="#4a4a3a" stroke-width="0.7"/>
<path d="M74.6,357.4 L76,359 L74.6,360.6" fill="none" stroke="#9a9a9a" stroke-width="0.7"/>
<rect x="603.4" y="478.4" width="15.6" height="15" fill="#fafafa" stroke="#d6d6d6" stroke-width="0.6"/><rect x="604" y="479" width="7.4" height="2.6" fill="#1c2a7c"/><path d="M604,483 H611 M604,485.8 H609 M604,488.6 H609 M604,491.4 H610" stroke="#b9b9b9" stroke-width="0.9"/><path d="M611.4,483.4 L616,484.6 L614.8,487 L616.4,489.6 L613,490.4 L610.4,487.6 Z" fill="#e11f26"/><rect x="611.8" y="491.4" width="5.4" height="1.7" fill="#111"/><rect x="619.2" y="478.8" width="2.8" height="14.6" fill="#5a5a5a"/>
<path d="M923.4,7.6 H930.4" stroke="#a9a9a9" stroke-width="0.9"/><path d="M979.6,4.6 L985.6,10.6 M985.6,4.6 L979.6,10.6" stroke="#8f8f8f" stroke-width="0.9"/>
<path d="M979.4,661.8 H982.8 L981.1,663.8 Z" fill="#333"/>
</svg>
</body></html>
